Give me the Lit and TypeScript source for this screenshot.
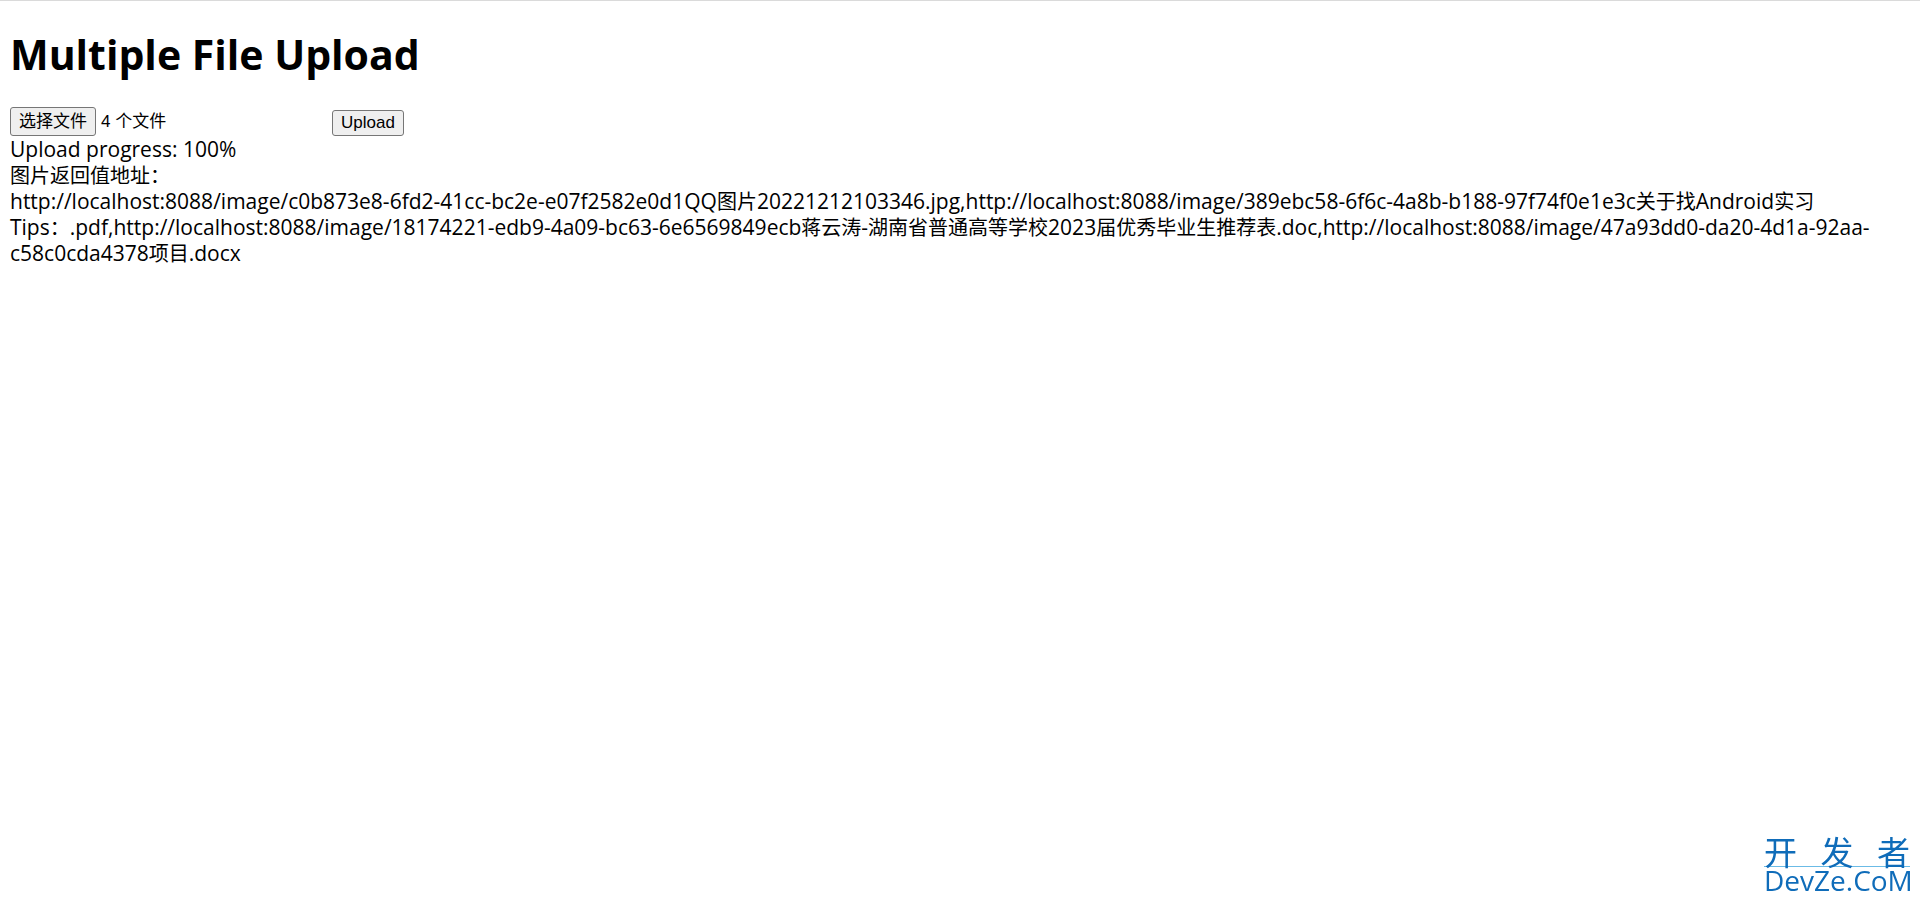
import { LitElement, html, css } from "lit";
import { customElement, state } from "lit/decorators.js";

@customElement("app-root")
export class AppRoot extends LitElement {
  static styles = css`
    :host {
      display: block;
      box-sizing: border-box;
      min-height: 100vh;
      padding: 26px 10px 10px;
      border-top: 1px solid #dadada;
      background: #fff;
      color: #000;
      font: 21px/26px "Open Sans", "Noto Sans CJK SC", sans-serif;
    }
    .title {
      margin: 0 0 26px;
      font-size: 41px;
      line-height: 54px;
      font-weight: 700;
    }
    .controls {
      display: flex;
      align-items: flex-end;
    }
    .picker {
      position: relative;
      display: flex;
      align-items: center;
      gap: 5px;
      width: 322px;
      font: 17px/27px "Liberation Sans", "Noto Sans CJK SC", sans-serif;
    }
    .native {
      position: absolute;
      inset: 0;
      width: 100%;
      opacity: 0;
    }
    .choose,
    .upload {
      box-sizing: border-box;
      border: 1px solid #767676;
      border-radius: 3px;
      background: #efefef;
      color: #000;
    }
    .choose {
      padding: 0 8px;
      height: 29px;
    }
    .upload {
      margin: 0;
      padding: 2px 8px;
      height: 26px;
      font: 17px/20px "Liberation Sans", sans-serif;
    }
    .result {
      overflow-wrap: break-word;
    }
    .han {
      font-size: 20px;
      line-height: 20px;
    }
    .brand {
      position: fixed;
      right: 10px;
      bottom: 9px;
      width: 146px;
      color: #0f6cb9;
    }
    .brand-top {
      display: flex;
      justify-content: space-between;
      border-bottom: 1px solid #6bbbe6;
      font: 33px/30px "Noto Sans CJK SC", sans-serif;
    }
    .brand-bottom {
      font: 28px/26px "Open Sans", sans-serif;
    }
  `;

  @state() private progress = 100;
  @state() private count = 4;
  @state() private urls = [
    "http://localhost:8088/image/c0b873e8-6fd2-41cc-bc2e-e07f2582e0d1QQ图片20221212103346.jpg",
    "http://localhost:8088/image/389ebc58-6f6c-4a8b-b188-97f74f0e1e3c关于找Android实习 Tips：.pdf",
    "http://localhost:8088/image/18174221-edb9-4a09-bc63-6e6569849ecb蒋云涛-湖南省普通高等学校2023届优秀毕业生推荐表.doc",
    "http://localhost:8088/image/47a93dd0-da20-4d1a-92aa-c58c0cda4378项目.docx",
  ];

  private onPick(e: Event) {
    this.count = (e.target as HTMLInputElement).files?.length ?? 0;
  }

  // Chinese runs are set one pixel smaller than the Latin text around them.
  private mixed(text: string) {
    return text
      .split(/([\u4e00-\u9fff\uff1a]+)/)
      .map((part, i) => (i % 2 ? html`<span class="han">${part}</span>` : part));
  }

  render() {
    return html`
      <h1 class="title">Multiple File Upload</h1>
      <div class="controls">
        <label class="picker">
          <input class="native" type="file" multiple @change=${this.onPick} />
          <span class="choose">选择文件</span>
          <span>${this.count} 个文件</span>
        </label>
        <button class="upload" type="button">Upload</button>
      </div>
      <div>Upload progress: ${this.progress}%</div>
      <div lang="zh-CN">${this.mixed("图片返回值地址：")}</div>
      <div class="result" lang="zh-CN">${this.mixed(this.urls.join(","))}</div>
      <div class="brand">
        <div class="brand-top"><span>开</span><span>发</span><span>者</span></div>
        <div class="brand-bottom">DevZe.CoM</div>
      </div>
    `;
  }
}
